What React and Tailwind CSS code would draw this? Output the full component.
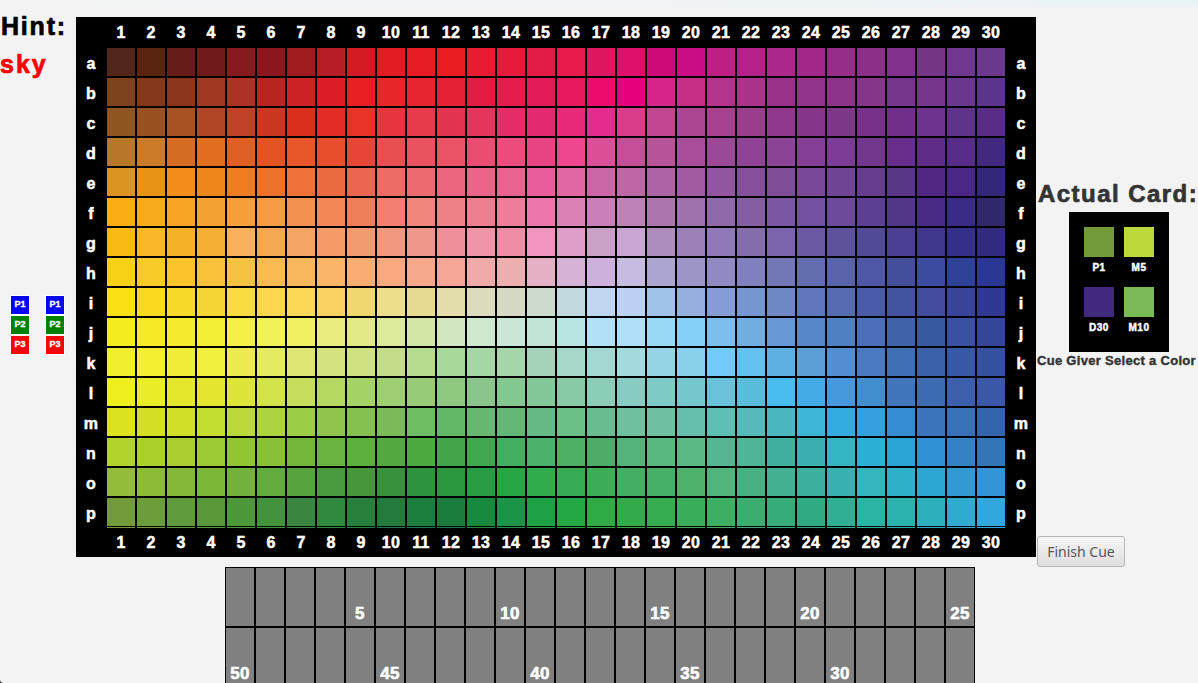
import React from "react";

const ROWS = {
  a: "52261b 58240f 661c18 711a1b 851b1e 8b171c 9f1b20 b51d27 d31921 e31b23 e61b23 ea1c24 e81b30 e61b3c e21c47 e81a4b de1660 df1069 d00979 cc0c84 be1f85 b2228a ab2789 a12888 962e87 8b2f88 82318c 743585 70378e 6a398d",
  b: "7c431c 86391a 8e361b a03822 ad3223 b72520 cd2326 dc1c26 e91f26 e92729 e8242f e52136 e41c44 e61c4d e21a58 e8195e ec0c6e e6007e d6248b c62f85 b2348d aa348b 9b3289 92338a 8c3487 853688 74358b 74358b 6a378e 5d348b",
  c: "8f5622 9a5122 a85123 b34527 c14126 cc3722 dc301f e32c25 e83329 e83640 e83a4a e53352 e5355f e52c69 e32a70 e92a7b e72a8d d93e8d c2468f ae4593 a6408f 9a3d8c 90398c 85368b 7d388a 77318b 712f8a 6d338e 5d348a 592d86",
  d: "b9772a cb7a28 d46d23 e06d20 df5f24 e25522 e85729 e84e2d e64537 e84f50 e9525f ea5466 ea4d72 ea4c7b e84383 ee478f da4f98 c44f97 b55499 aa4d9b 9a4999 8e4396 8a4395 833f96 7c3b94 72368c 692e8c 5f2c88 572b88 412a7e",
  e: "dd9321 e69316 f28c1a ee8619 ee7d24 ef722b f0703a ec6b41 ec6550 ec6c66 ec6b70 ec6580 eb658a ea6491 e95d9d e067a2 cc66a6 bd67a4 ae65a6 a25aa1 92559f 854f9b 7e4d96 794897 6f4495 663c8e 583688 522784 482785 33277a",
  f: "fbad14 f8ac1d f8a526 f4a234 f69f3c f69c47 f19250 f38757 ee7e5a f27f71 ef877b ef8189 ee7f93 ef7e9c ed77ac dd82b7 ca7fb8 bd82b6 ae76af 9e71ad 8f69a9 855ea2 7a57a0 7450a0 6b4a9a 5c3f92 523789 492a84 3a2b85 2f2869",
  g: "fab913 fab727 f5b027 f5ae33 f7b05c f5a752 f5a463 f49b67 f29a70 f2987f ef968d f0909a f094a8 f08da6 ef95be df9dc9 c9a0c6 c8a5d2 af8cbe 9c80b8 9178b8 836dab 7a64ab 6b59a3 5e529d 514a97 4b3f94 3f378c 342f88 312a7e",
  h: "f8d016 f9cb28 fac42a f8c33b f6c241 fabb52 f8b75c fbb569 f8ad74 f9a87f f5a88a f6a699 f0aaaa ebafb0 e5b0c6 d6b3d6 cbb1dc c7bbdf aca5d0 9e95c7 9089c4 7f80bd 7178b5 626eae 5a62aa 4f58a6 434f9b 3c4a9f 2f4299 2b3893",
  i: "fbe016 f9da1e f7d92a f4d534 f8dc40 fdd54e fbd855 f9d263 efd76e ecde8a e8da91 e3deac dcdbbd d6dac5 cddacd c1d8de c0d5ef bdd1f2 a0c3e9 95b0de 859cd6 7696d1 6e88c6 6177bd 566bb0 4a5ca9 42539f 444c9e 374498 2f3892",
  j: "f3ed1f f6ea25 f5ea2d f2f035 f4f048 f4f25a f3ef63 eaec80 e2ea88 dbea9b d4e6a6 d1e6c1 cfe6cf c9e6d6 c2e4d5 b8e4e2 b2e0f6 b1dff7 98d9f5 84d0f8 7ebeee 70ade1 6899d6 5787c9 4f80c0 4b6fbb 3f62a8 37599f 3a50a4 344698",
  k: "f0ef2e f4ef30 f0ee38 f1f03d edeb4f e5eb60 dde772 d6e27f cfe282 c3dc89 b5dc90 a9d89b a6d5a6 a6d5aa a6d2b9 a6d7ca a3d7d2 a3dadc 94d4e4 87d2ea 71caf7 63c1f1 5eb0e3 5a9fd6 528ed1 4a78c1 3f6eb5 3a60aa 3757a8 3650a0",
  l: "eef01e ebec28 e4e72c e3e52f dde638 d3e34b c5dd5a b4d861 a6d365 9dcf71 97cb77 8ec97f 8ac58c 83c890 84c799 87c9a4 8bcdb7 87cbc2 7ecac5 76c6cd 69c2da 59bddb 48bcee 44abe6 4699dc 408ecd 4075bc 3c6baf 3c60ac 3a58a6",
  m: "dde21f d3df24 d0df28 c5dc30 bcd93b add43f 9ccd47 8fc54d 84c14f 7abb57 6fbd63 63b868 69b871 65b777 66b985 6ac087 69bc90 6fc09e 6fc0a0 65bfac 5ebfb4 57b9ba 4bb8c0 3db6d7 33ade1 369fe0 358cd1 3a75bd 3871b7 3465ac",
  n: "b2d32b acd02b abcd2f 9dcb33 92c631 88c038 72b73a 68b43e 5eb03e 53a93f 4bab40 43a44a 3fa84c 43ad60 4cb16b 4faf64 4fac68 55b37a 5ab87e 5ab985 57b692 50b598 41b0a0 3cb0b0 34b5c3 2db0d6 2ba3d7 3092d5 3482c5 3375b7",
  o: "94bb39 8cbb37 85b838 7cb739 71b13c 62ab3f 57a43e 4a9b40 47963c 38923d 2f9440 2b983f 289c42 29a644 30ac4c 37ab53 3dad58 44ae64 46b068 4fb26c 4fb57d 47b183 44b292 3cb09e 38b1b1 35b6bf 2fb0c9 2da7d2 3399d4 3494d8",
  p: "739b3b 6b9d3a 5f9b3d 589839 4e983c 43923e 3a853f 2f8a3f 267f3b 227a3b 1c7e3c 1a7d3e 188a3e 1c9447 1ea045 23a845 2faa45 33ab4a 36ad50 3aae5b 3caf63 3aad6f 35ac79 30aa82 2fb094 2ab4a4 2cb2ad 2eb0bb 2fabd0 31a7dd",
};

const columns = Array.from({ length: 30 }, (_, i) => i + 1);

function Label({ children, letter }) {
  return (
    <div
      className={`w-[30px] h-[30px] flex items-center justify-center text-white font-bold text-[16px] tracking-[0.3px] [-webkit-text-stroke:0.5px_white] ${
        letter ? "pt-[3px]" : "pt-[2px]"
      }`}
    >
      {children}
    </div>
  );
}

function NumberRow() {
  return (
    <>
      <Label />
      {columns.map((n) => (
        <Label key={n}>{n}</Label>
      ))}
      <Label />
    </>
  );
}

function Board() {
  return (
    <div className="grid grid-cols-[repeat(32,30px)] grid-rows-[repeat(18,30px)] bg-black w-[960px] h-[540px] shrink-0">
      <NumberRow />
      {Object.entries(ROWS).map(([letter, colors]) => (
        <React.Fragment key={letter}>
          <Label letter>{letter}</Label>
          {colors.split(" ").map((c, i) => (
            <div
              key={i}
              className="w-[30px] h-[30px] border border-black"
              style={{
                backgroundColor: `#${c}`,
                boxShadow: letter === "p" ? `0 2px 0 -1px #${c}` : undefined,
              }}
            />
          ))}
          <Label letter>{letter}</Label>
        </React.Fragment>
      ))}
      <NumberRow />
    </div>
  );
}

function Token({ label, className }) {
  return (
    <div className={`w-[20px] h-[20px] border border-white flex items-center justify-center text-white font-bold text-[9px] [-webkit-text-stroke:0.3px_white] ${className}`}>
      {label}
    </div>
  );
}

function TokenColumn() {
  return (
    <div className="flex flex-col w-[20px]">
      <Token label="P1" className="bg-[#0000ff]" />
      <Token label="P2" className="bg-[#008000]" />
      <Token label="P3" className="bg-[#ff0000]" />
    </div>
  );
}

function LeftColumn() {
  return (
    <div className="w-[76px] shrink-0 flex flex-col">
      <div className="pl-px text-[25px] leading-[18px] font-bold text-black tracking-[1.8px] [-webkit-text-stroke:0.7px_black]">Hint:</div>
      <div className="mt-[20px] text-[25px] leading-[18px] font-bold text-[#ff0000] tracking-[2px] [-webkit-text-stroke:0.7px_#ff0000]">sky</div>
      <div className="mt-[222px] ml-[10px] flex gap-[15px]">
        <TokenColumn />
        <TokenColumn />
      </div>
    </div>
  );
}

function Swatch({ label, className }) {
  return (
    <div className="flex flex-col items-center w-[30px]">
      <div className={`w-[30px] h-[30px] ${className}`} />
      <div className="h-[30px] pt-[4px] w-[40px] shrink-0 text-center leading-[14px] text-white font-bold text-[10px] tracking-[0.5px] [-webkit-text-stroke:0.45px_white]">{label}</div>
    </div>
  );
}

function RightColumn() {
  return (
    <div className="flex-1 min-w-0 flex flex-col items-start">
      <div className="mt-[165px] pl-[2px] whitespace-nowrap text-[24px] leading-[24px] font-bold text-[#333333] tracking-[1.45px] [-webkit-text-stroke:0.7px_#333333]">Actual Card:</div>
      <div className="mt-[6px] ml-[33px] w-[100px] h-[140px] bg-black p-[15px] grid grid-cols-[30px_30px] gap-x-[10px] content-start">
        <Swatch label="P1" className="bg-[#739b3b]" />
        <Swatch label="M5" className="bg-[#bcd93b]" />
        <Swatch label="D30" className="bg-[#412a7e]" />
        <Swatch label="M10" className="bg-[#7abb57]" />
      </div>
      <div className="mt-[2px] pl-px whitespace-nowrap text-[13px] leading-[14px] font-bold text-[#333333] tracking-[0.3px] [-webkit-text-stroke:0.4px_#333333]">Cue Giver Select a Color</div>
      <button className="mt-[168px] ml-px w-[88px] h-[31px] shrink-0 rounded-[3px] border border-[#b5b5b5] bg-gradient-to-b from-[#f6f6f6] to-[#dedede] text-[14px] text-[#555555] [font-family:'Noto_Sans',sans-serif]">
        Finish Cue
      </button>
    </div>
  );
}

const SCORE_ROWS = [
  Array.from({ length: 25 }, (_, i) => ((i + 1) % 5 === 0 ? i + 1 : "")),
  Array.from({ length: 25 }, (_, i) => (i % 5 === 0 ? 50 - i : "")),
];

function ScoreTrack() {
  return (
    <div className="ml-[225px] grid grid-cols-[repeat(25,30px)] w-[750px]">
      {SCORE_ROWS.flat().map((n, i) => (
        <div
          key={i}
          className="w-[30px] h-[60px] border border-black bg-[#808080] flex items-end justify-center pb-[3px] text-white font-bold text-[17px] leading-[18px] tracking-[0.3px] [-webkit-text-stroke:0.6px_white]"
        >
          {n}
        </div>
      ))}
    </div>
  );
}

export default function App() {
  return (
    <div className="w-[1198px] h-[683px] bg-[#3a3a3a] overflow-hidden [font-family:'Liberation_Sans',Arial,sans-serif]">
      <div className="h-full bg-[#f3f3f3] rounded-bl-[4px] overflow-hidden flex flex-col">
        <div className="h-[7px] shrink-0 bg-gradient-to-r from-[#f4f4f4] to-[#ebf3f7]" />
        <div className="mt-[10px] h-[540px] shrink-0 flex">
          <LeftColumn />
          <Board />
          <RightColumn />
        </div>
        <div className="mt-[10px]">
          <ScoreTrack />
        </div>
      </div>
    </div>
  );
}
